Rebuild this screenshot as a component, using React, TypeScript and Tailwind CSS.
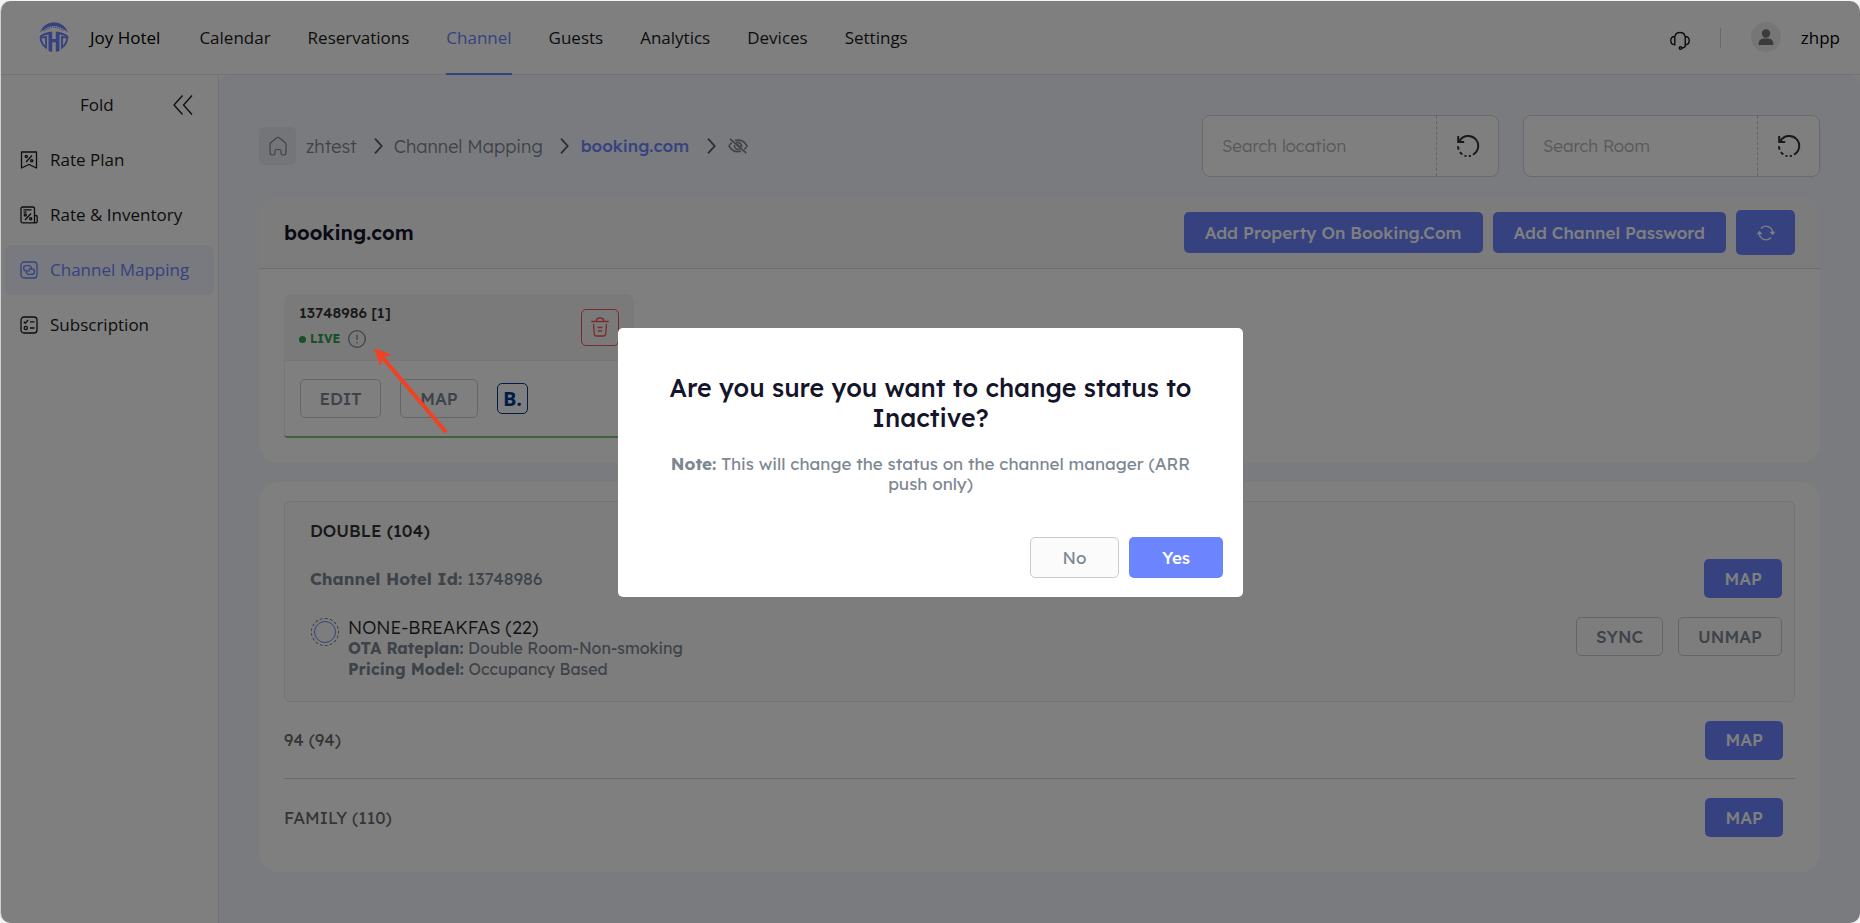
import { useState, type ReactNode } from "react"

type IconProps = { className?: string }

const primaryButton = "rounded-[5px] bg-[#6c85ff] text-[17px] font-medium text-white"
const outlineButton = "rounded-[5px] border border-[#c8cbd0] text-[17px] font-medium text-[#7d8792]"

function Logo({ className }: IconProps) {
  return (
    <svg viewBox="0 0 30 30" className={className} fill="currentColor" aria-hidden="true">
      <path d="M1 10.500A14.700 14.700 0 0 1 29 10.500L26.500 8.500Q15-.5 3.500 8.500Z" />
      <path d="M5 8.800Q15 1.500 25 8.800" fill="none" stroke="currentColor" strokeWidth="1.400" strokeDasharray="1 1" />
      <path d="M.8 14Q5 10 13.200 9.500V17h3.600V9.500Q25 10 29.200 14L28.500 15.500Q25 13 20.500 12.500V29L16.800 30V20.300H13.200V30L9.500 29V12.500Q5 13 1.500 15.500Z" />
      <path d="M7 15v10.500Q2 22 1.600 15.500ZM23 15v10.500Q28 22 28.400 15.500Z" fill="none" stroke="currentColor" strokeWidth="1.900" />
    </svg>
  )
}

function RatePlanIcon({ className }: IconProps) {
  return (
    <svg viewBox="0 0 18 18" className={className} fill="none" stroke="currentColor" strokeWidth="1.300" aria-hidden="true">
      <path d="M1.500 1h15v16l-7.500-3.500L1.500 17z" strokeLinejoin="round" />
      <path d="M6 11l6-6.500" />
      <circle cx="6.300" cy="5.500" r="1.100" />
      <circle cx="11.700" cy="9.800" r="1.100" />
    </svg>
  )
}

function RateInventoryIcon({ className }: IconProps) {
  return (
    <svg viewBox="0 0 18 18" className={className} fill="none" stroke="currentColor" strokeWidth="1.300" aria-hidden="true">
      <path d="M14.500 16.800H2.500a1.500 1.500 0 0 1-1.500-1.500V2.500A1.500 1.500 0 0 1 2.500 1h10.500a1.500 1.500 0 0 1 1.500 1.500v14.300zM14.500 9.500h1.300q1.400 0 1.400 1.400v4.500q0 1.400-1.400 1.400h-1.300" />
      <path d="M3.500 3.800h8M3.500 6.200h3M5 14l6-6.500" />
      <circle cx="5.300" cy="9" r="1.100" />
      <circle cx="10.700" cy="12.700" r="1.100" />
    </svg>
  )
}

function MappingIcon({ className }: IconProps) {
  return (
    <svg viewBox="0 0 18 18" className={className} fill="none" stroke="currentColor" strokeWidth="1.300" aria-hidden="true">
      <rect x="1" y="1" width="16" height="16" rx="3" />
      <path d="M7 9.800H6.300a2.600 2.600 0 0 1 0-5.200h2.500a2.600 2.600 0 0 1 2.500 3.300M11 8h.8a2.700 2.700 0 0 1 0 5.400H9a2.600 2.600 0 0 1-2.500-3.500M7 9.800h3M8.500 8H11" />
    </svg>
  )
}

function SubscriptionIcon({ className }: IconProps) {
  return (
    <svg viewBox="0 0 18 18" className={className} fill="none" stroke="currentColor" strokeWidth="1.300" aria-hidden="true">
      <rect x="1" y="1" width="16" height="16" rx="3" />
      <path d="M3.800 5.700l1.500 1.500 2.800-3.200M10 5.800h4.500M10 12h4.500" />
      <circle cx="5.800" cy="12" r="1.600" />
    </svg>
  )
}

function FoldIcon({ className }: IconProps) {
  return (
    <svg viewBox="0 0 20 20" className={className} fill="none" stroke="currentColor" strokeWidth="1.300" aria-hidden="true">
      <path d="M9.500.5L1 10l8.500 9.500M19 .5L10.500 10l8.500 9.500" />
    </svg>
  )
}

function HomeIcon({ className }: IconProps) {
  return (
    <svg viewBox="0 0 18 20" className={className} fill="none" stroke="currentColor" strokeWidth="1.200" strokeLinejoin="round" aria-hidden="true">
      <path d="M1 8.500Q1 7.300 2 6.500L7.800 1.700q1.200-.9 2.400 0L16 6.500q1 .8 1 2v8q0 2.500-2.500 2.500h-.7q-1.800 0-1.800-1.800v-2.200q0-1.500-1.500-1.500h-3q-1.500 0-1.500 1.500v2.200Q6 19 4.200 19H3.500Q1 19 1 16.500z" />
    </svg>
  )
}

function Chevron() {
  return (
    <svg viewBox="0 0 9 16" className="h-4 w-[9px] text-[#555b64]" fill="none" stroke="currentColor" strokeWidth="1.800" aria-hidden="true">
      <path d="M1 .7L7.700 8L1 15.300" />
    </svg>
  )
}

function EyeOffIcon({ className }: IconProps) {
  return (
    <svg viewBox="0 0 20 16" className={className} fill="none" stroke="currentColor" strokeWidth="1.600" aria-hidden="true">
      <path d="M7 2.500Q15 .5 19 8q-1 2-2.600 3.400M13 13.200Q5 15.200 1 8q1-2 2.800-3.500M2 .8l16.300 14.400" />
      <path d="M8 4.800a4 4 0 0 1 5.500 4.500M12 11.300a4 4 0 0 1-5.500-4.500" />
      <path d="M9 6.500l3.500 3" strokeWidth="2" />
    </svg>
  )
}

function ResetIcon({ className }: IconProps) {
  return (
    <svg viewBox="0 0 24 24" className={className} fill="none" stroke="currentColor" strokeWidth="2" aria-hidden="true">
      <path d="M3.500 7A10 10 0 1 1 17 20.700" />
      <path d="M2.200 2v6h6" />
      <path d="M2 12.200a10 10 0 0 0 .7 3.500M4 18a10 10 0 0 0 2.300 2.400M8.500 21.600a10 10 0 0 0 2 .5M12.800 22.100a10 10 0 0 0 2-.4" />
    </svg>
  )
}

function RefreshIcon({ className }: IconProps) {
  return (
    <svg viewBox="0 0 20 16" className={className} fill="none" stroke="currentColor" strokeWidth="1.300" aria-hidden="true">
      <path d="M5 3.500A6.700 6.700 0 0 1 16.700 7.500M15 12.500A6.700 6.700 0 0 1 3.300 8.500" />
      <path d="M13.500 6.700h6l-3 3.600zM.5 9.300h6l-3-3.600z" fill="currentColor" stroke="none" />
    </svg>
  )
}

function HeadsetIcon({ className }: IconProps) {
  return (
    <svg viewBox="0 0 20 20" className={className} fill="none" stroke="currentColor" strokeWidth="1.400" aria-hidden="true">
      <path d="M4.800 6.500a5.400 5.400 0 0 1 10.400 0M4.800 6.500v8.300Q.8 14.800.8 10.600t4-4.100zM15.200 6.500v8.300q4 0 4-4.200t-4-4.100zM15.800 14.800q-.6 3-4 3.200" />
      <circle cx="10.500" cy="18" r="1.300" />
    </svg>
  )
}

function TrashIcon({ className }: IconProps) {
  return (
    <svg viewBox="0 0 18 20" className={className} fill="none" stroke="currentColor" strokeWidth="1.300" aria-hidden="true">
      <path d="M.3 4.500h17.400M5 4.500q0-3.500 4-3.500t4 3.500M2.500 7l.8 10q.2 2 2.200 2h7q2 0 2.200-2l.8-10M6.500 10.500h5M7 14h4" />
    </svg>
  )
}

function InfoIcon({ className }: IconProps) {
  return (
    <svg viewBox="0 0 18 18" className={className} fill="none" stroke="currentColor" strokeWidth="1.300" aria-hidden="true">
      <circle cx="9" cy="9" r="8.300" />
      <path d="M9 4.500v5.500M9 12v1.500" />
    </svg>
  )
}

const navItems = ["Calendar", "Reservations", "Channel", "Guests", "Analytics", "Devices", "Settings"]

const sideItems = [
  { label: "Rate Plan", Icon: RatePlanIcon },
  { label: "Rate & Inventory", Icon: RateInventoryIcon },
  { label: "Channel Mapping", Icon: MappingIcon },
  { label: "Subscription", Icon: SubscriptionIcon },
]

const rooms = ["94 (94)", "FAMILY (110)"]

function Header() {
  return (
    <header className="flex h-[74px] shrink-0 items-stretch border-b border-[#e9e9ec] bg-white pr-5 pl-[38px] text-[17px] text-[#1a1a1a]">
      <div className="flex items-center">
        <Logo className="mb-0.5 h-[30px] w-[30px] text-[#6c85ff]" />
        <span className="ml-[21px] text-black">Joy Hotel</span>
      </div>
      <nav className="-mb-px ml-[39px] flex gap-[37px]">
        {navItems.map((item) => (
          <a
            key={item}
            href="#"
            className={
              item === "Channel"
                ? "flex items-center border-y-2 border-t-transparent border-b-[#6c85ff] text-[#6c85ff]"
                : "flex items-center"
            }
          >
            {item}
          </a>
        ))}
      </nav>
      <div className="ml-auto flex items-center">
        <button aria-label="Support">
          <HeadsetIcon className="mt-1 h-5 w-5" />
        </button>
        <span className="ml-[30px] h-5 w-px bg-[#d0d0d4]" />
        <span className="mb-0.5 ml-[30px] flex h-[30px] w-[30px] items-center justify-center rounded-full bg-[#ececec]">
          <svg viewBox="0 0 16 16" className="h-4 w-4" fill="#777" aria-hidden="true">
            <circle cx="8" cy="4.500" r="4.200" />
            <path d="M.5 16q0-6.500 5-6.500h5q5 0 5 6.500z" />
          </svg>
        </span>
        <span className="ml-5 text-black">zhpp</span>
      </div>
    </header>
  )
}

function Sidebar() {
  return (
    <aside className="w-[218px] shrink-0 border-r border-[#e9e9ec] bg-white px-1 text-[17px] text-[#1a1a1a]">
      <div className="flex h-[60px] items-center justify-between pr-[21px] pl-[75px]">
        <span>Fold</span>
        <button aria-label="Fold menu">
          <FoldIcon className="h-5 w-5" />
        </button>
      </div>
      <ul className="space-y-[5px]">
        {sideItems.map(({ label, Icon }) => (
          <li key={label}>
            <a
              href="#"
              className={
                label === "Channel Mapping"
                  ? "flex h-[50px] items-center gap-3 rounded-md bg-[#f2f4fe] px-[15px] text-[#6c85ff]"
                  : "flex h-[50px] items-center gap-3 rounded-md px-[15px]"
              }
            >
              <Icon className="h-[18px] w-[18px]" />
              {label}
            </a>
          </li>
        ))}
      </ul>
    </aside>
  )
}

function SearchBox({ label }: { label: string }) {
  return (
    <div className="flex h-[62px] w-[297px] overflow-hidden rounded-lg border border-[#d3d5db] bg-white">
      <input
        type="text"
        aria-label={label}
        placeholder={label}
        className="min-w-0 flex-1 px-[19px] text-[17px] font-light outline-none placeholder:text-[#aeb2b8]"
      />
      <button
        aria-label={`Reset ${label}`}
        className="flex w-[62px] items-center justify-center border-l border-dashed border-[#c4c7ce] text-[#333]"
      >
        <ResetIcon className="h-6 w-6" />
      </button>
    </div>
  )
}

function Toolbar() {
  return (
    <div className="flex items-center justify-between">
      <nav aria-label="Breadcrumb" className="flex items-center text-[18px] font-light text-[#7d8792]">
        <a href="#" aria-label="Home" className="flex h-[38px] w-[37px] items-center justify-center rounded-[5px] bg-[#e9ebf0]">
          <HomeIcon className="h-5 w-[18px]" />
        </a>
        <a href="#" className="mr-[17px] ml-2.5">zhtest</a>
        <Chevron />
        <a href="#" className="mr-[17px] ml-[11px]">Channel Mapping</a>
        <Chevron />
        <a href="#" className="mr-[18px] ml-3 text-[17px] font-medium text-[#6c85ff]">booking.com</a>
        <Chevron />
        <button aria-label="Hide" className="ml-3">
          <EyeOffIcon className="h-4 w-5" />
        </button>
      </nav>
      <div className="flex gap-6">
        <SearchBox label="Search location" />
        <SearchBox label="Search Room" />
      </div>
    </div>
  )
}

function PropertyCard() {
  return (
    <article className="w-[350px] overflow-hidden rounded-t-lg rounded-b-sm border-b-2 border-[#7cc67c]">
      <div className="flex h-[66px] items-center justify-between bg-[#f4f4f4] px-[15px]">
        <div className="pb-0.5">
          <p className="text-[15px] leading-5 font-medium text-[#333]">13748986 [1]</p>
          <p className="mt-1.5 flex items-center text-[12px] leading-5 font-bold text-[#2fa04e]">
            <span className="mr-1 h-[7px] w-[7px] rounded-full bg-[#2fa04e]" />
            LIVE
            <InfoIcon className="ml-2 h-[18px] w-[18px] text-[#7d8792]" />
          </p>
        </div>
        <button aria-label="Delete" className="flex h-[37px] w-[38px] items-center justify-center rounded-[5px] border border-[#f2555a] text-[#f2555a]">
          <TrashIcon className="h-5 w-[18px]" />
        </button>
      </div>
      <div className="flex h-[76px] items-center border-x border-t border-[#eee] px-[15px]">
        <button className={`h-[39px] w-[81px] ${outlineButton}`}>EDIT</button>
        <button className={`ml-[19px] h-[39px] w-[78px] ${outlineButton}`}>MAP</button>
        <button
          aria-label="Booking.com"
          className="ml-[19px] flex h-[31px] w-[31px] items-center justify-center rounded-[5px] border border-[#003b95] font-['Open_Sans',sans-serif] text-xl font-bold text-[#003b95]"
        >
          B.
        </button>
      </div>
    </article>
  )
}

function ChannelPanel() {
  return (
    <section className="rounded-[20px] bg-white">
      <div className="flex h-[72px] items-center justify-between rounded-t-[20px] border-b border-[#d9dadd] bg-[#f9f9f9] px-[25px]">
        <h1 className="text-[20px] font-semibold text-[#14142b]">booking.com</h1>
        <div className="flex items-center gap-2.5">
          <button className={`h-[41px] px-[21px] ${primaryButton}`}>Add Property On Booking.Com</button>
          <button className={`h-[41px] px-[21px] ${primaryButton}`}>Add Channel Password</button>
          <button aria-label="Refresh" className={`flex h-[45px] w-[59px] items-center justify-center ${primaryButton}`}>
            <RefreshIcon className="h-4 w-5" />
          </button>
        </div>
      </div>
      <div className="p-[25px]">
        <PropertyCard />
      </div>
    </section>
  )
}

function RoomPanel() {
  return (
    <section className="rounded-[20px] bg-white px-[25px] pt-[19px] pb-4">
      <div className="rounded-md border border-[#e6e6f2] bg-[#fbfbfb] pt-4 pr-3 pb-[21px] pl-[25px]">
        <h2 className="text-[17px] leading-[26px] font-medium text-[#333]">DOUBLE (104)</h2>
        <div className="mt-[15px] flex items-center justify-between">
          <p className="text-[17px] text-[#7d8792]">
            <b>Channel Hotel Id:</b> 13748986
          </p>
          <button className={`h-[39px] px-5 ${primaryButton}`}>MAP</button>
        </div>
        <div className="mt-[19px] flex items-start justify-between">
          <div className="flex items-start gap-2">
            <input
              type="radio"
              name="rateplan"
              aria-label="NONE-BREAKFAS (22)"
              className="m-1 h-[22px] w-[22px] appearance-none rounded-full border border-[#6c85ff] outline-1 outline-offset-2 outline-[#777] outline-dashed"
            />
            <div className="text-[16px] leading-[21px] text-[#7d8792]">
              <p className="text-[18px] font-light text-[#222]">NONE-BREAKFAS (22)</p>
              <p><b>OTA Rateplan:</b> Double Room-Non-smoking</p>
              <p><b>Pricing Model:</b> Occupancy Based</p>
            </div>
          </div>
          <div className="flex gap-[15px]">
            <button className={`h-[39px] px-[19px] ${outlineButton}`}>SYNC</button>
            <button className={`h-[39px] px-[19px] ${outlineButton}`}>UNMAP</button>
          </div>
        </div>
      </div>
      {rooms.map((room) => (
        <div key={room} className="flex h-[77px] items-center justify-between border-b border-[#d3d3d6] pr-3 text-[17px] text-[#6b6b6b] last:border-b-0">
          <span>{room}</span>
          <button className={`h-[39px] px-5 ${primaryButton}`}>MAP</button>
        </div>
      ))}
    </section>
  )
}

function ConfirmDialog({ onClose }: { onClose: () => void }) {
  return (
    <div className="absolute inset-0 flex items-start justify-center bg-black/50 pt-[327px]">
      <div role="dialog" aria-modal="true" aria-labelledby="confirm-title" className="w-[625px] rounded-[5px] bg-white px-5 pt-[45px] pb-[19px]">
        <h2 id="confirm-title" className="px-5 text-center text-[25px] leading-[30px] font-medium text-[#14142b]">
          Are you sure you want to change status to Inactive?
        </h2>
        <p className="mt-[21px] px-5 text-center text-[17px] leading-5 text-[#7d8792]">
          <b>Note:</b> This will change the status on the channel manager (ARR push only)
        </p>
        <div className="mt-[43px] flex justify-end gap-2.5">
          <button onClick={onClose} className="h-[41px] w-[89px] rounded-[5px] border border-[#c8cbd4] bg-[#fbfbfb] text-[17px] text-[#7d8792]">
            No
          </button>
          <button onClick={onClose} className={`h-[41px] w-[94px] ${primaryButton}`}>
            Yes
          </button>
        </div>
      </div>
    </div>
  )
}

function Shell({ children }: { children: ReactNode }) {
  return (
    <div className="bg-[#f4f4f4] pt-px font-['Open_Sans',sans-serif]">
      <div className="relative flex min-h-[calc(100vh-1px)] flex-col overflow-hidden rounded-[10px] border-l border-[#d0d0d0] bg-white">
        {children}
      </div>
    </div>
  )
}

export default function App() {
  const [open, setOpen] = useState(true)

  return (
    <Shell>
      <Header />
      <div className="flex flex-1">
        <Sidebar />
        <main className="flex-1 rounded-t-[10px] bg-[#f4f6fe] px-10 pt-10 pb-[51px] font-['Lexend','Inter',sans-serif]">
          <Toolbar />
          <div className="mt-5 space-y-[19px]">
            <ChannelPanel />
            <RoomPanel />
          </div>
        </main>
      </div>
      {open && (
        <div className="font-['Lexend','Inter',sans-serif]">
          <ConfirmDialog onClose={() => setOpen(false)} />
        </div>
      )}
      {/* Pointer to the status info icon */}
      <svg viewBox="0 0 76 88" className="pointer-events-none absolute top-[345px] left-[371px] h-[88px] w-[76px]" aria-hidden="true">
        <path d="M11 12L73 85" stroke="#f04123" strokeWidth="4" strokeLinecap="round" />
        <path d="M2 2L20 9L11 11L8 20Z" fill="#f04123" />
      </svg>
    </Shell>
  )
}
